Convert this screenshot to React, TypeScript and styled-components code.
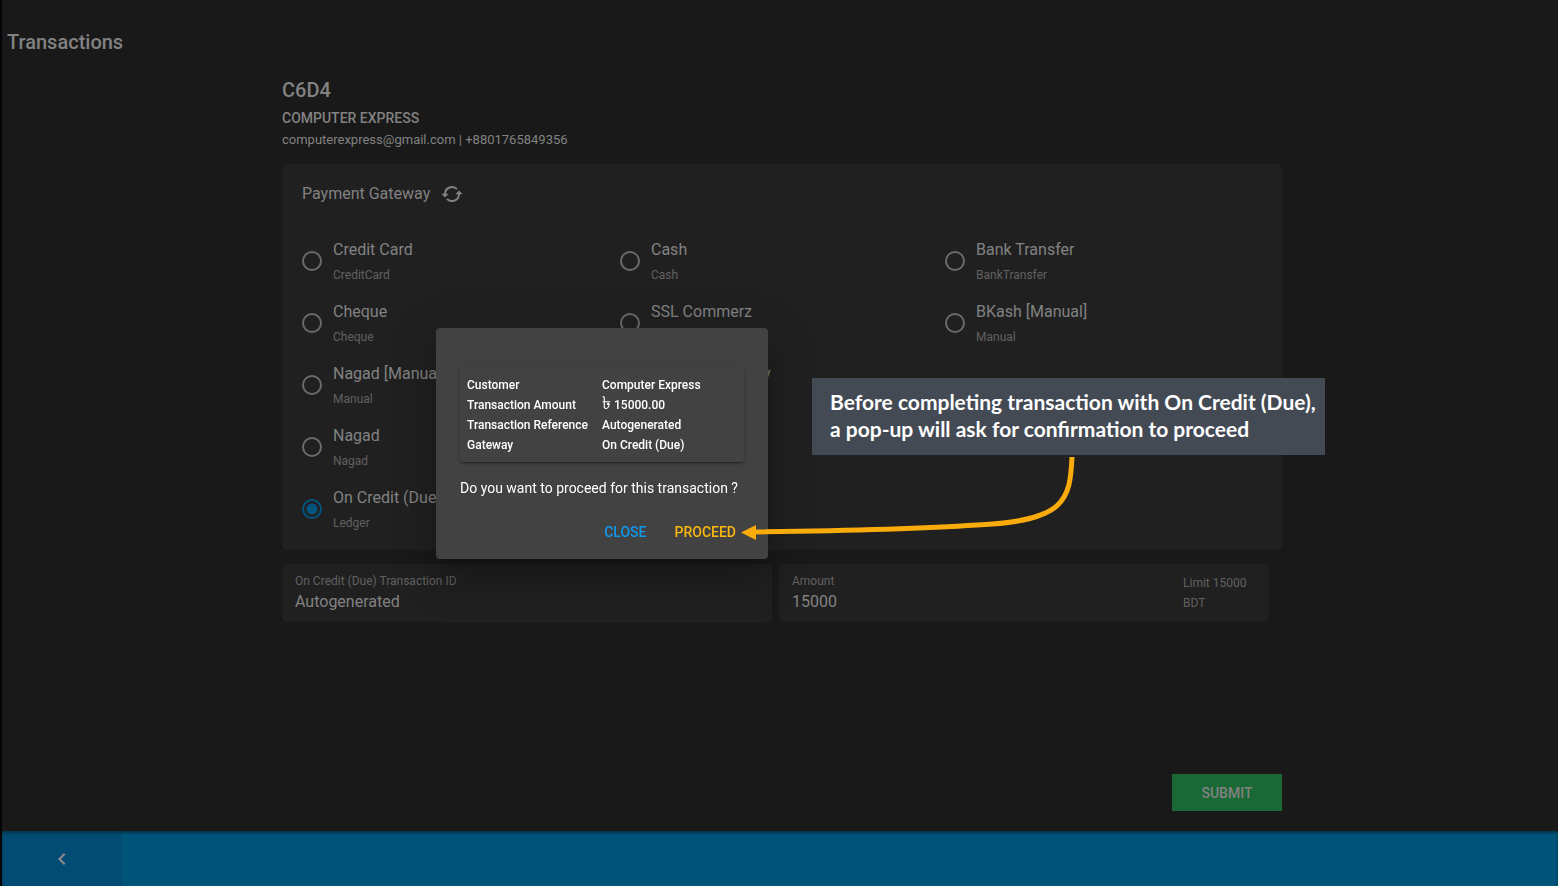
import React, { useState } from "react";
import styled, { createGlobalStyle } from "styled-components";
import { MdChevronLeft } from "react-icons/md";

const GlobalStyle = createGlobalStyle`
  * { box-sizing: border-box; }
  body {
    margin: 0;
    background: #191919;
    color: #828282;
    font-family: Roboto, "Liberation Sans", sans-serif;
    font-size: 16px;
  }
  h1, h2, h3, p { margin: 0; }
  button, input { font-family: inherit; }
`;

const Page = styled.div`
  min-height: 100vh;
  display: flex;
  flex-direction: column;
  border-left: 2px solid #040506;
`;

const Main = styled.main`
  flex: 1;
  display: flex;
  flex-direction: column;
  padding: 30px 1px 20px 5px;
`;

const PageTitle = styled.h1`
  font-size: 20px;
  line-height: 24px;
  font-weight: 500;
`;

const Content = styled.div`
  flex: 1;
  display: flex;
  flex-direction: column;
  width: 100%;
  max-width: 1000px;
  margin: 0 auto;
  padding-top: 24px;
`;

const CustomerCode = styled.h2`
  font-size: 20px;
  line-height: 24px;
  font-weight: 500;
`;

const CustomerName = styled.h3`
  margin-top: 6px;
  font-size: 14px;
  line-height: 20px;
  font-weight: 500;
  text-transform: uppercase;
`;

const CustomerContact = styled.p`
  margin-top: 2px;
  font-size: 13px;
  line-height: 20px;
`;

const GatewayCard = styled.section`
  margin-top: 14px;
  padding: 18px 20px 10px;
  border-radius: 5px;
  background: #202020;
`;

const GatewayHeader = styled.header`
  display: flex;
  align-items: center;
  gap: 10px;
  height: 24px;
`;

const GatewayTitle = styled.h3`
  font-size: 16px;
  line-height: 24px;
  font-weight: 400;
`;

const IconButton = styled.button`
  display: flex;
  padding: 0;
  border: 0;
  background: none;
  color: inherit;
`;

const GatewayColumns = styled.div`
  display: grid;
  grid-template-columns: 318fr 325fr 317fr;
  margin-top: 24px;
`;

const GatewayOption = styled.label`
  display: flex;
  align-items: center;
  gap: 11px;
  height: 62px;
`;

const Radio = styled.input`
  appearance: none;
  flex: none;
  width: 20px;
  height: 20px;
  margin: 0;
  border: 2px solid #6a6a6a;
  border-radius: 50%;

  &:checked {
    border-color: #00547d;
    background: radial-gradient(circle, #00547d 5px, transparent 6px);
  }
`;

const OptionText = styled.span`
  display: flex;
  flex-direction: column;
  gap: 1px;
  padding-top: 2px;
`;

const OptionName = styled.span`
  line-height: 24px;
`;

const OptionType = styled.span`
  min-height: 24px;
  color: #606060;
  font-size: 12px;
  line-height: 24px;
`;

const FieldRow = styled.div`
  display: grid;
  grid-template-columns: 1fr 1fr;
  gap: 7px;
  margin: 14px 13px 0 0;
`;

const Field = styled.div`
  display: flex;
  justify-content: space-between;
  height: 58px;
  padding: 7px 18px 0 13px;
  border-radius: 5px;
  background: #202020;
`;

const FieldLabel = styled.label`
  display: flex;
  flex: 1;
  flex-direction: column;
  color: #606060;
  font-size: 12px;
  line-height: 20px;
`;

const FieldInput = styled.input`
  width: 100%;
  height: 20px;
  padding: 0;
  border: 0;
  outline: 0;
  background: none;
  color: #828282;
  font-size: 16px;
`;

const FieldHint = styled.p`
  padding-top: 2px;
  color: #606060;
  font-size: 12px;
  line-height: 20px;
  width: 68px;
`;

const SubmitButton = styled.button`
  align-self: flex-end;
  width: 110px;
  height: 37px;
  margin-top: auto;
  border: 0;
  background: #1a6836;
  color: #828282;
  font-size: 14px;
  font-weight: 500;
  text-transform: uppercase;
`;

const BottomBar = styled.nav`
  display: flex;
  height: 55px;
  background: #00547a;
  box-shadow: inset 0 2px 3px rgba(0, 0, 0, 0.4);
`;

const BackButton = styled.button`
  display: flex;
  align-items: center;
  justify-content: center;
  width: 120px;
  border: 0;
  background: rgba(8, 56, 96, 0.3);
  color: #8b8b8b;
`;

const Overlay = styled.div`
  position: fixed;
  inset: 0;
  display: flex;
  align-items: center;
  justify-content: center;
  padding: 1px 354px 0 0;
`;

const Dialog = styled.div`
  position: relative;
  flex: none;
  width: 332px;
  padding: 38px 24px 9px;
  border-radius: 4px;
  background: #424242;
  color: #ffffff;
  box-shadow: 0 11px 15px -7px rgba(0, 0, 0, 0.2),
    0 24px 38px 3px rgba(0, 0, 0, 0.14), 0 9px 46px 8px rgba(0, 0, 0, 0.12);
`;

const SummaryCard = styled.div`
  padding: 9px 7px 7px;
  border-radius: 4px;
  box-shadow: 0 3px 1px -2px rgba(0, 0, 0, 0.2),
    0 2px 2px 0 rgba(0, 0, 0, 0.14), 0 1px 5px 0 rgba(0, 0, 0, 0.12);
`;

const SummaryTable = styled.table`
  width: 100%;
  border-collapse: collapse;
  font-size: 12px;
  line-height: 20px;

  th, td {
    height: 20px;
    padding: 0;
    font-weight: 500;
    text-align: left;
    white-space: nowrap;
  }
  th { width: 135px; }
`;

const Currency = styled.span`
  font-size: 18px;
  line-height: 1px;
`;

const Question = styled.p`
  margin-top: 16px;
  font-size: 14px;
  line-height: 20px;
  white-space: nowrap;
`;

const DialogActions = styled.div`
  display: flex;
  justify-content: flex-end;
  margin: 16px -6px 0 0;
`;

const ActionButton = styled.button<{ $color: string }>`
  height: 36px;
  padding: 0 14px;
  border: 0;
  background: none;
  color: ${(p) => p.$color};
  font-size: 14px;
  font-weight: 500;
  text-transform: uppercase;
`;

const Callout = styled.aside`
  position: absolute;
  top: 50px;
  left: 376px;
  width: 513px;
  padding: 10px 0 13px 18px;
  background: #434a54;
  color: #ffffff;
  font-family: Lato, sans-serif;
  font-size: 21px;
  font-weight: 700;
  line-height: 27px;
  white-space: nowrap;
`;

const CalloutArrow = styled.svg`
  position: absolute;
  top: 128px;
  left: 304px;
  pointer-events: none;
`;

const columns = [
  [
    { name: "Credit Card", type: "CreditCard" },
    { name: "Cheque", type: "Cheque" },
    { name: "Nagad [Manual]", type: "Manual" },
    { name: "Nagad", type: "Nagad" },
    { name: "On Credit (Due)", type: "Ledger" },
  ],
  [
    { name: "Cash", type: "Cash" },
    { name: "SSL Commerz", type: "" },
    { name: "Cheque Gateway", type: "" },
  ],
  [
    { name: "Bank Transfer", type: "BankTransfer" },
    { name: "BKash [Manual]", type: "Manual" },
  ],
];

const summary = [
  { label: "Customer", value: "Computer Express" },
  { label: "Transaction Amount", value: "15000.00", currency: "৳" },
  { label: "Transaction Reference", value: "Autogenerated" },
  { label: "Gateway", value: "On Credit (Due)" },
];

const SyncIcon = () => (
  <svg width="24" height="24" viewBox="0 0 24 24" aria-hidden="true">
    <path
      d="M5 12.500V12A7 7 0 0 1 17 7.1M19 11.500V12A7 7 0 0 1 7 16.9"
      fill="none"
      stroke="currentColor"
      strokeWidth="2"
    />
    <path d="M1.300 11.800h7.400L5 15.600zM22.700 12.200h-7.400L19 8.400z" fill="currentColor" />
  </svg>
);

export default function App() {
  const [selected, setSelected] = useState("On Credit (Due)");
  const [amount, setAmount] = useState("15000");

  return (
    <>
      <GlobalStyle />
      <Page>
        <Main>
          <PageTitle>Transactions</PageTitle>
          <Content>
            <CustomerCode>C6D4</CustomerCode>
            <CustomerName>Computer Express</CustomerName>
            <CustomerContact>computerexpress@gmail.com | +8801765849356</CustomerContact>

            <GatewayCard>
              <GatewayHeader>
                <GatewayTitle>Payment Gateway</GatewayTitle>
                <IconButton type="button" aria-label="Refresh gateways">
                  <SyncIcon />
                </IconButton>
              </GatewayHeader>
              <GatewayColumns>
                {columns.map((options, i) => (
                  <div key={i}>
                    {options.map((o) => (
                      <GatewayOption key={o.name}>
                        <Radio
                          type="radio"
                          name="gateway"
                          checked={selected === o.name}
                          onChange={() => setSelected(o.name)}
                        />
                        <OptionText>
                          <OptionName>{o.name}</OptionName>
                          <OptionType>{o.type}</OptionType>
                        </OptionText>
                      </GatewayOption>
                    ))}
                  </div>
                ))}
              </GatewayColumns>
            </GatewayCard>

            <FieldRow>
              <Field>
                <FieldLabel>
                  On Credit (Due) Transaction ID
                  <FieldInput readOnly value="Autogenerated" />
                </FieldLabel>
              </Field>
              <Field>
                <FieldLabel>
                  Amount
                  <FieldInput value={amount} onChange={(e) => setAmount(e.target.value)} />
                </FieldLabel>
                <FieldHint>
                  Limit 15000
                  <br />
                  BDT
                </FieldHint>
              </Field>
            </FieldRow>

            <SubmitButton type="submit">Submit</SubmitButton>
          </Content>
        </Main>
        <BottomBar>
          <BackButton type="button" aria-label="Back">
            <MdChevronLeft size={24} />
          </BackButton>
        </BottomBar>
      </Page>

      <Overlay>
        <Dialog role="dialog" aria-modal="true" aria-label="Confirm transaction">
          <SummaryCard>
            <SummaryTable>
              <tbody>
                {summary.map((row) => (
                  <tr key={row.label}>
                    <th scope="row">{row.label}</th>
                    <td>
                      {row.currency && <Currency>{row.currency}</Currency>}
                      {row.currency && " "}
                      {row.value}
                    </td>
                  </tr>
                ))}
              </tbody>
            </SummaryTable>
          </SummaryCard>
          <Question>Do you want to proceed for this transaction ?</Question>
          <DialogActions>
            <ActionButton type="button" $color="#1199ee">Close</ActionButton>
            <ActionButton type="button" $color="#fbb80f">Proceed</ActionButton>
          </DialogActions>
          <Callout>
            Before completing transaction with On Credit (Due),
            <br />a pop-up will ask for confirmation to proceed
          </Callout>
          <CalloutArrow width="340" height="90" viewBox="740 456 340 90" aria-hidden="true">
            <path
              d="M1072 457C1070 500 1066 521 977 525Q900 530 754 532"
              fill="none"
              stroke="#f9ab0b"
              strokeWidth="5"
            />
            <path d="M741 532.500L756 525V540Z" fill="#f9ab0b" />
          </CalloutArrow>
        </Dialog>
      </Overlay>
    </>
  );
}
